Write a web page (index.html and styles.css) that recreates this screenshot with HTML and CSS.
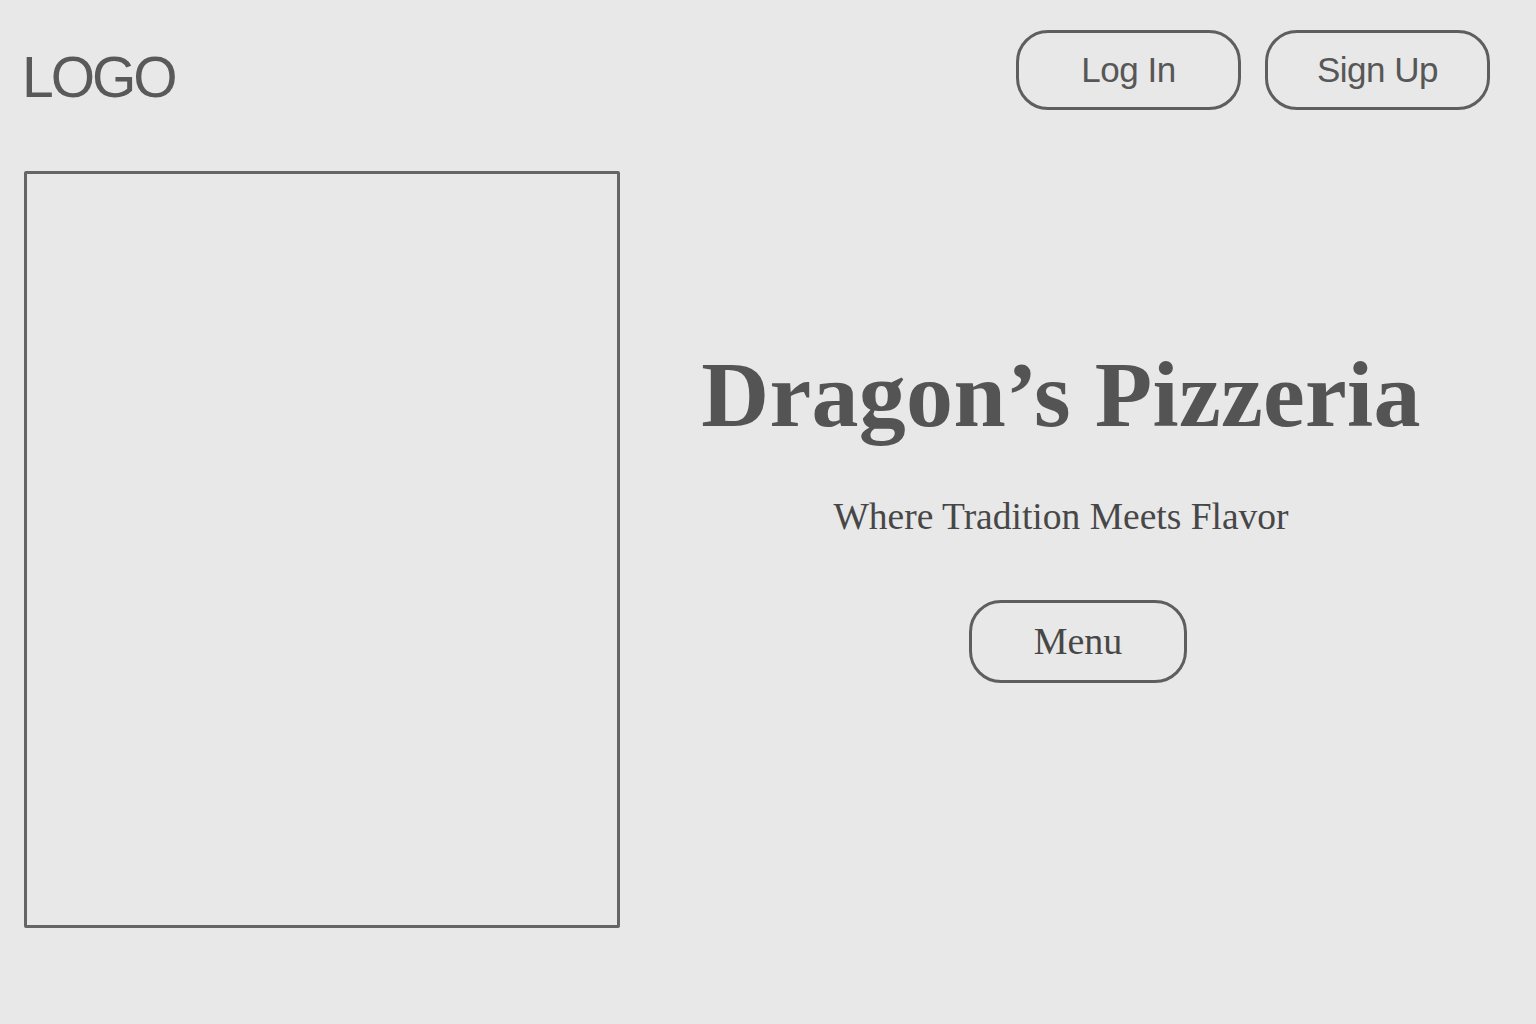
FILE: index.html
```html
<!DOCTYPE html>
<html lang="en">
<head>
<meta charset="utf-8">
<title>Dragon's Pizzeria</title>
<link rel="stylesheet" href="styles.css">
</head>
<body>
<header class="topbar">
  <div class="logo">LOGO</div>
  <nav class="auth">
    <a class="pill" href="#">Log In</a>
    <a class="pill" href="#">Sign Up</a>
  </nav>
</header>
<main class="hero">
  <div class="image-box"></div>
  <section class="intro">
    <h1 class="title">Dragon’s Pizzeria</h1>
    <p class="tagline">Where Tradition Meets Flavor</p>
    <a class="menu-btn" href="#">Menu</a>
  </section>
</main>
</body>
</html>
```

FILE: styles.css
```css
html, body {
  margin: 0;
  padding: 0;
  background: #e8e8e8;
  width: 1536px;
  height: 1024px;
  overflow: hidden;
}

.topbar {
  display: flex;
  justify-content: space-between;
  align-items: flex-start;
  padding: 30px 46px 0 22px;
}

.logo {
  font-family: "Liberation Sans", Arial, sans-serif;
  font-size: 57px;
  line-height: 1;
  letter-spacing: -3px;
  color: #595959;
  margin-top: 19px;
}

.auth {
  display: flex;
  gap: 24px;
}

.pill {
  box-sizing: border-box;
  width: 225px;
  height: 80px;
  border: 3px solid #5e5e5e;
  border-radius: 32px;
  display: flex;
  align-items: center;
  justify-content: center;
  font-family: "Liberation Sans", Arial, sans-serif;
  font-size: 35px;
  letter-spacing: -0.5px;
  color: #575757;
  text-decoration: none;
}

.hero {
  display: flex;
  margin-top: 61px;
}

.image-box {
  box-sizing: border-box;
  width: 596px;
  height: 757px;
  margin-left: 24px;
  border: 3px solid #656565;
  border-radius: 2px;
  flex: none;
}

.intro {
  flex: 1;
  display: flex;
  flex-direction: column;
  align-items: center;
  padding-top: 176px;
}

.title {
  margin: 0 34px 0 0;
  font-family: "Liberation Serif", "Times New Roman", serif;
  font-weight: bold;
  font-size: 94px;
  line-height: 1;
  color: #545454;
  letter-spacing: 0.3px;
}

.tagline {
  margin: 57px 34px 0 0;
  font-family: "Liberation Serif", "Times New Roman", serif;
  font-size: 37.5px;
  line-height: 1;
  color: #474747;
}

.menu-btn {
  box-sizing: border-box;
  margin-top: 64px;
  width: 218px;
  height: 83px;
  border: 3px solid #5e5e5e;
  border-radius: 32px;
  display: flex;
  align-items: center;
  justify-content: center;
  font-family: "Liberation Serif", "Times New Roman", serif;
  font-size: 38px;
  color: #474747;
  text-decoration: none;
}
```
